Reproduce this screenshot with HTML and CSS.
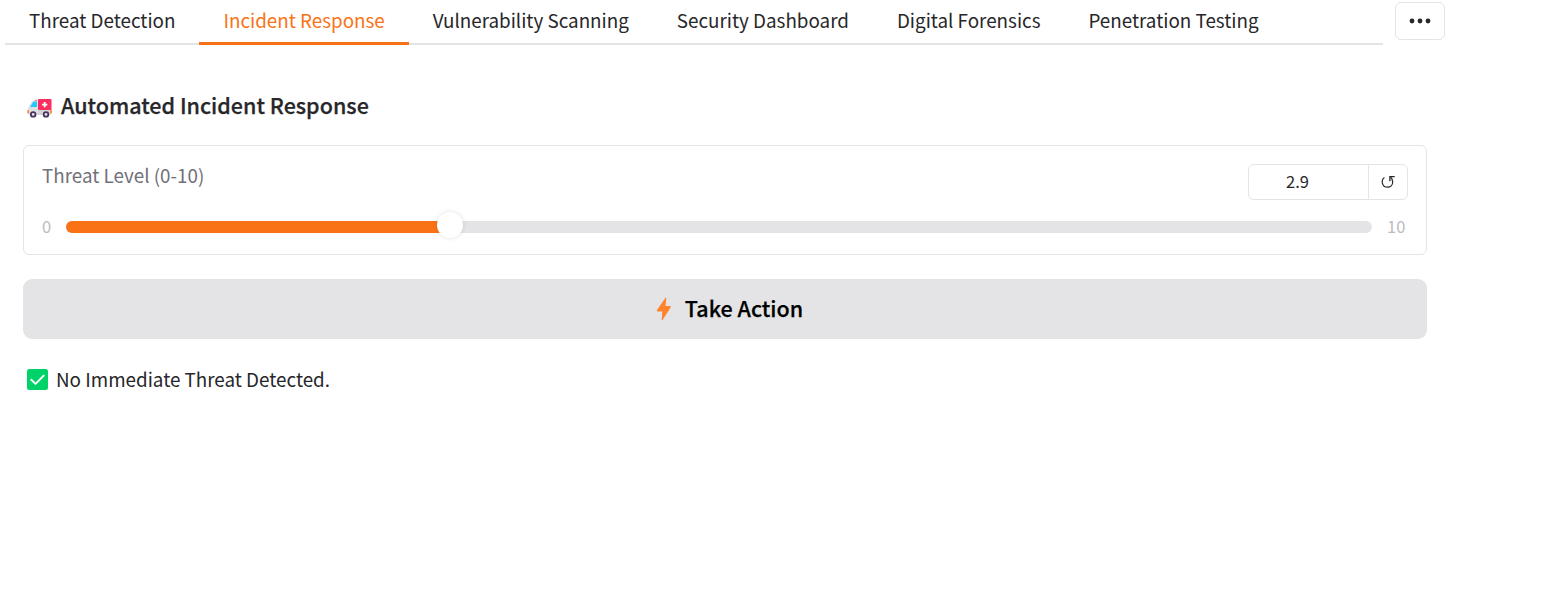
FILE: index.html
```html
<!DOCTYPE html>
<html lang="en">
<head>
<meta charset="utf-8">
<title>Incident Response</title>
<link rel="stylesheet" href="styles.css">
</head>
<body>
<header class="tab-bar">
  <nav class="tabs">
    <button class="tab">Threat Detection</button>
    <button class="tab active">Incident Response</button>
    <button class="tab">Vulnerability Scanning</button>
    <button class="tab">Security Dashboard</button>
    <button class="tab">Digital Forensics</button>
    <button class="tab">Penetration Testing</button>
  </nav>
  <button class="more" aria-label="More tabs">
    <svg width="22" height="6" viewBox="0 0 22 6"><g fill="#27272a"><circle cx="3" cy="3" r="2.4"/><circle cx="11" cy="3" r="2.4"/><circle cx="19" cy="3" r="2.4"/></g></svg>
  </button>
</header>
<main class="panel">
  <h3 class="title">
    <svg class="ambulance" width="26" height="20" viewBox="0 0 26 20">
      <path d="M1 15V10L5 3.5Q6 2 8 2H11V17H2Q1 17 1 15Z" fill="#dedfe3"/>
      <path d="M11 12H24V17H11Z" fill="#d3d3d3"/>
      <path d="M3 9L6 4.200Q6.500 3.500 7.500 3.500H10V9Z" fill="#26c9fc"/>
      <rect x="8" y="1.500" width="2" height="1.500" rx=".7" fill="#f97a94"/>
      <rect x="11" y="1" width="13.500" height="11" rx=".8" fill="#f92f60"/>
      <path d="M16.800 4h1.800v1.700h1.700v1.800H18.600v1.700h-1.800V7.500h-1.700V5.700h1.700z" fill="#fff"/>
      <rect x=".3" y="12" width="1.700" height="3.500" rx=".8" fill="#ff822d"/>
      <rect x="23.300" y="12" width="1.700" height="3.500" rx=".8" fill="#ff822d"/>
      <g fill="#e6e6e6" stroke="#46335f" stroke-width="1.800"><circle cx="6.200" cy="16.400" r="2.300"/><circle cx="19" cy="16.400" r="2.300"/></g>
    </svg>
    <span>Automated Incident Response</span>
  </h3>
  <section class="slider-card">
    <div class="slider-head">
      <label class="slider-label">Threat Level (0-10)</label>
      <div class="value-box">
        <span class="value">2.9</span>
        <button class="reset" aria-label="Reset">
          <svg width="14" height="14" viewBox="0 0 14 14" fill="none" stroke="#27272a" stroke-width="1.200"><path d="M3.400 2.600C1.500 3.800 .9 5.800 1.300 7.800C1.900 10.700 4 12.200 6.500 12.200C9.500 12.200 11.700 10 11.700 7C11.700 5 10.800 3.200 9.500 1.900"/><path d="M13.700 1.700H8.900V6.200" stroke-width="1.300"/></svg>
        </button>
      </div>
    </div>
    <div class="slider-row">
      <span class="bound">0</span>
      <div class="track"><div class="fill" style="width:29%"></div><div class="thumb" style="left:29%"></div></div>
      <span class="bound bound-max">10</span>
    </div>
  </section>
  <button class="action">
    <svg class="bolt" width="16" height="24" viewBox="0 0 16 24"><path d="M9.500 .7Q10.400 0 10.300 1.300L9.500 9H14Q15.300 9.300 14.600 10.500L6.700 22.800Q5.700 23.700 5.700 22.400L6.300 14.500H1.500Q.4 14.200 1 13Z" fill="#ff822d"/></svg>
    <span>Take Action</span>
  </button>
  <p class="status">
    <svg width="21" height="21" viewBox="0 0 21 21"><rect width="21" height="21" rx="2.500" fill="#00d26a"/><path d="M4.300 10.700L8.500 14.900L16.700 6.600" fill="none" stroke="#fff" stroke-width="2" stroke-linecap="round" stroke-linejoin="round"/></svg>
    <span>No Immediate Threat Detected.</span>
  </p>
</main>
</body>
</html>
```
FILE: styles.css
```css
* { box-sizing: border-box; }
body {
  margin: 0;
  background: #fff;
  color: #27272a;
  font-family: "Noto Sans CJK SC", "Noto Sans", sans-serif;
  font-size: 18.82px;
}
button {
  margin: 0;
  padding: 0;
  border: 0;
  background: none;
  color: inherit;
  font: inherit;
}
svg { display: block; flex: none; }
.tab-bar { display: flex; width: 1445px; height: 45px; padding-left: 5px; }
.tabs {
  display: flex;
  width: 1378px;
  height: 45px;
  background: linear-gradient(#e4e4e7, #e4e4e7) 0 43px / 100% 2px no-repeat;
}
.tab {
  height: 45px;
  padding: 0 24px 3px;
  border-bottom: 3px solid transparent;
  line-height: 39px;
  white-space: nowrap;
}
.tab.active { color: #f97316; border-bottom-color: #f97316; }
.more {
  display: flex;
  align-items: center;
  justify-content: center;
  width: 50px;
  height: 38px;
  margin: 2px 0 0 12px;
  border: 1px solid #e4e4e7;
  border-radius: 6px;
}
.panel { width: 1404px; margin: 46px 0 0 23px; }
.title {
  display: flex;
  align-items: center;
  height: 30px;
  margin: 0 0 24px;
  padding-left: 4px;
  gap: 8px;
  font-size: 21.5px;
  font-weight: 500;
  line-height: 28px;
}
.title span, .action span { margin-bottom: 2px; -webkit-text-stroke: .25px currentColor; }
.ambulance { margin-top: 3px; }
.slider-card {
  height: 110px;
  padding: 18px;
  border: 1px solid #e4e4e7;
  border-radius: 6px;
}
.slider-head { display: flex; justify-content: space-between; height: 36px; }
.slider-label { line-height: 22px; color: #71717a; }
.value-box {
  display: flex;
  width: 160px;
  height: 36px;
  border: 1px solid #e4e4e7;
  border-radius: 6px;
}
.value { width: 119px; padding-right: 22px; text-align: center; font-size: 16.5px; line-height: 32px; }
.reset { display: flex; flex: 1; align-items: center; justify-content: center; border-left: 1px solid #e4e4e7; }
.slider-row { display: flex; align-items: center; height: 24px; margin-top: 15px; color: #bbbbc2; font-size: 16.5px; }
.bound { width: 24px; height: 24px; line-height: 22px; }
.bound-max { width: 21px; margin-left: 15px; }
.track { position: relative; width: 1306px; height: 12px; border-radius: 6px; background: #e4e4e7; }
.fill { height: 12px; border-radius: 6px 0 0 6px; background: #f97316; }
.thumb {
  position: absolute;
  top: -9px;
  width: 26px;
  height: 26px;
  margin-left: -8px;
  border-radius: 50%;
  background: #fff;
  box-shadow: 0 0 5px rgba(0, 0, 0, .12);
}
.action {
  display: flex;
  align-items: center;
  justify-content: center;
  gap: 13px;
  width: 100%;
  height: 60px;
  margin-top: 24px;
  padding-left: 9px;
  border-radius: 9px;
  background: #e4e4e7;
  color: #000;
  font-size: 21.5px;
  font-weight: 500;
}
.action span { margin-bottom: 4px; }
.status { display: flex; align-items: center; gap: 8px; height: 30px; margin: 25px 0 0; padding-left: 4px; }
.status span { margin-bottom: 2px; }
```
